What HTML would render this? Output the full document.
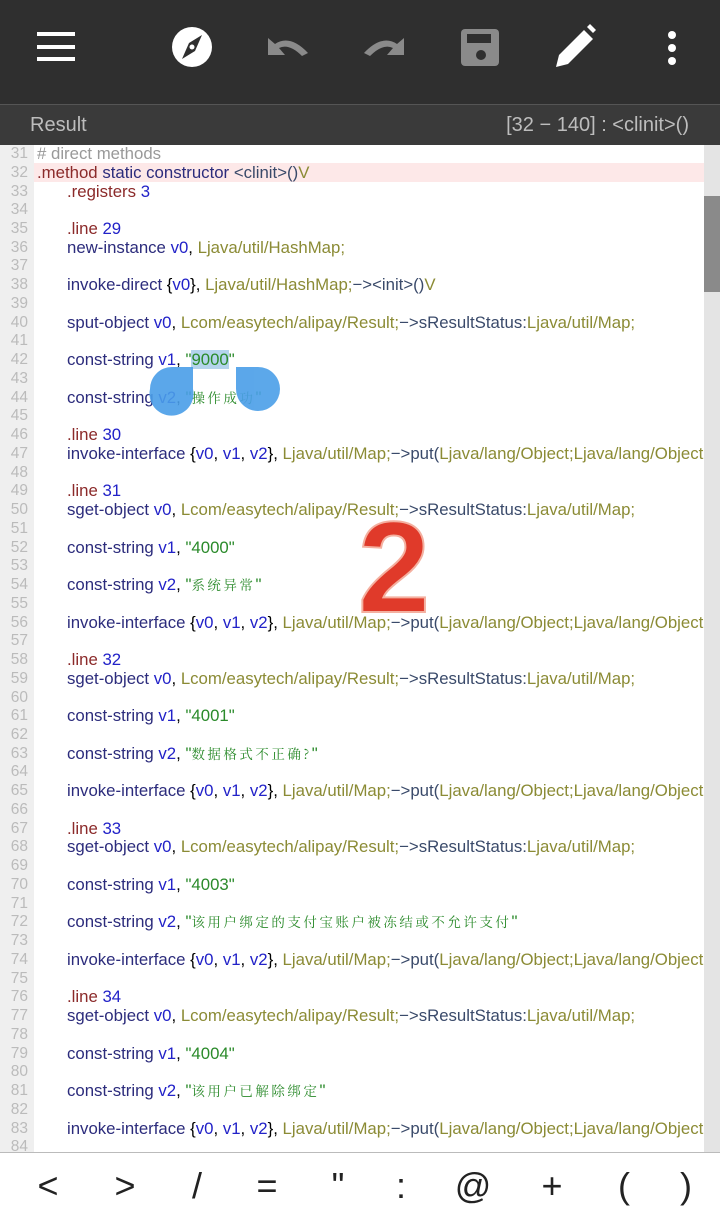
<!DOCTYPE html>
<html><head><meta charset="utf-8"><style>
*{margin:0;padding:0;box-sizing:border-box}
body{width:720px;height:1222px;overflow:hidden;background:#fff;font-family:"Liberation Sans","Noto Sans CJK SC",sans-serif;position:relative}
#top{position:absolute;left:0;top:0;width:720px;height:104px;background:#2f2f2f}
#sep{position:absolute;left:0;top:104px;width:720px;height:1px;background:#555}
#bar{position:absolute;left:0;top:105px;width:720px;height:40px;background:#3a3a3a;color:#bdbdbd;font-size:20px}
#bar .l{position:absolute;left:30px;top:9px}
#bar .r{position:absolute;right:31px;top:9px}
#gut{position:absolute;left:0;top:145px;width:34px;height:1007px;background:#efefef}
#sb{position:absolute;left:704px;top:145px;width:16px;height:1007px;background:#e4e4e4}
#th{position:absolute;left:704px;top:196px;width:16px;height:96px;background:#8a8a8a}
.ln{position:absolute;left:0;width:704px;height:19px;font-size:16.8px;line-height:19px;white-space:nowrap;overflow:hidden}
.ln .n{position:absolute;left:0;width:28px;text-align:right;color:#bbb;font-size:15.5px}
.ln .c{position:absolute;left:37px}
.ln .c.i{left:67px}
.k{color:#2c2c7c}.d{color:#8b2a2a}.b{color:#2222c8}.s{color:#2a8a2a}.t{color:#8b8b35}.a{color:#3a4a6a}.g{color:#999}
.cj{font-family:"Noto Serif CJK SC","Liberation Serif",serif;font-size:13.5px;letter-spacing:2.5px}
#bot{position:absolute;left:0;top:1152px;width:720px;height:70px;background:#fff;border-top:1px solid #bbb}
#bot span{position:absolute;top:12px;font-size:36px;color:#222;transform:translateX(-50%)}
</style></head><body>
<div id="top">
<svg width="720" height="104" style="position:absolute;left:0;top:0">
<rect x="37" y="32" width="38" height="4" fill="#fff"/><rect x="37" y="45" width="38" height="4" fill="#fff"/><rect x="37" y="57" width="38" height="4" fill="#fff"/>
<circle cx="192" cy="47" r="20" fill="#fff"/><path d="M202 35 L195 51 L182 59 L189 43 Z" fill="#2f2f2f"/><circle cx="192" cy="47" r="2.5" fill="#fff"/>
<path d="M268 55 L268 38 L275 44 Q290 34 308 53 L302 56 Q289 43 279 48 L285 55 Z" fill="#8a8a8a"/>
<path d="M404 55 L404 38 L397 44 Q382 34 364 53 L370 56 Q383 43 393 48 L387 55 Z" fill="#8a8a8a"/>
<rect x="461" y="29" width="38" height="37" rx="4" fill="#8a8a8a"/><rect x="467" y="34" width="24" height="9" fill="#2f2f2f"/><circle cx="481" cy="55" r="5" fill="#2f2f2f"/>
<path d="M556 67 L559 55 L584 30 L593 39 L568 64 Z" fill="#fff"/><path d="M587 27 L590 24 L596 30 L593 33 Z" fill="#fff"/>
<circle cx="672" cy="35" r="4" fill="#fff"/><circle cx="672" cy="48" r="4" fill="#fff"/><circle cx="672" cy="61" r="4" fill="#fff"/>
</svg></div>
<div id="sep"></div>
<div id="bar"><span class="l">Result</span><span class="r">[32 − 140] : &lt;clinit&gt;()</span></div>
<div id="gut"></div>
<div style="position:absolute;left:34px;top:163px;width:670px;height:19px;background:#fde8e8"></div>
<div id="code"></div>
<div id="sb"></div><div id="th"></div>
<svg width="720" height="1222" style="position:absolute;left:0;top:0;pointer-events:none">
<g opacity="0.9">
<path d="M150 389 A22 22 0 1 0 193 389 L193 367 L172 367 A22 22 0 0 0 150 389 Z" fill="#4a9ee8"/>
<path d="M236 367 L258 367 A22 22 0 1 1 236 389 Z" fill="#4a9ee8"/>
</g>
<text x="394" y="612" font-family="Liberation Sans,sans-serif" font-size="130" font-weight="bold" fill="#e03a2a" text-anchor="middle" stroke="#f4b0a0" stroke-width="2">2</text>
</svg>
<div id="bot"><span style="left:48px">&lt;</span><span style="left:125px">&gt;</span><span style="left:197px">/</span><span style="left:267px">=</span><span style="left:338px">"</span><span style="left:401px">:</span><span style="left:473px">@</span><span style="left:552px">+</span><span style="left:624px">(</span><span style="left:686px">)</span></div>
<script>
var inv='<span class="k">invoke-interface</span> {<span class="b">v0</span>, <span class="b">v1</span>, <span class="b">v2</span>}, <span class="t">Ljava/util/Map;</span><span class="a">−&gt;put(</span><span class="t">Ljava/lang/Object;Ljava/lang/Object;</span><span class="a">)L</span>';
var sg='<span class="k">sget-object</span> <span class="b">v0</span>, <span class="t">Lcom/easytech/alipay/Result;</span><span class="a">−&gt;sResultStatus:</span><span class="t">Ljava/util/Map;</span>';
function cs(v,s,cj){return '<span class="k">const-string</span> <span class="b">'+v+'</span>, <span class="s">"'+(cj?'<span class="cj">'+s+'</span>':s)+'"</span>';}
function li(n){return '<span class="d">.line</span> <span class="b">'+n+'</span>';}
var L={31:[0,'<span class="g"># direct  methods</span>'],32:[0,'<span class="d">.method</span> <span class="k">static  constructor</span> <span class="a">&lt;clinit&gt;()</span><span class="t">V</span>'],
33:[1,'<span class="d">.registers</span> <span class="b">3</span>'],35:[1,li(29)],36:[1,'<span class="k">new-instance</span> <span class="b">v0</span>, <span class="t">Ljava/util/HashMap;</span>'],
38:[1,'<span class="k">invoke-direct</span> {<span class="b">v0</span>}, <span class="t">Ljava/util/HashMap;</span><span class="a">−&gt;&lt;init&gt;()</span><span class="t">V</span>'],
40:[1,'<span class="k">sput-object</span> <span class="b">v0</span>, <span class="t">Lcom/easytech/alipay/Result;</span><span class="a">−&gt;sResultStatus:</span><span class="t">Ljava/util/Map;</span>'],
42:[1,'<span class="k">const-string</span> <span class="b">v1</span>, <span class="s">"<span style="background:#b4d4ec">9000</span>"</span>'],44:[1,cs('v2','操作成功',1)],
46:[1,li(30)],47:[1,inv],49:[1,li(31)],50:[1,sg],52:[1,cs('v1','4000')],54:[1,cs('v2','系统异常',1)],56:[1,inv],
58:[1,li(32)],59:[1,sg],61:[1,cs('v1','4001')],63:[1,cs('v2','数据格式不正确?',1)],65:[1,inv],
67:[1,li(33)],68:[1,sg],70:[1,cs('v1','4003')],72:[1,cs('v2','该用户绑定的支付宝账户被冻结或不允许支付',1)],74:[1,inv],
76:[1,li(34)],77:[1,sg],79:[1,cs('v1','4004')],81:[1,cs('v2','该用户已解除绑定',1)],83:[1,inv]};
var h='';
for(var n=31;n<=84;n++){var t=144+(n-31)*18.74;var e=L[n];
h+='<div class="ln" style="top:'+t.toFixed(1)+'px"><span class="n">'+n+'</span>'+(e?'<span class="c'+(e[0]?' i':'')+'">'+e[1]+'</span>':'')+'</div>';}
document.getElementById('code').innerHTML=h;
</script>
</body></html>
